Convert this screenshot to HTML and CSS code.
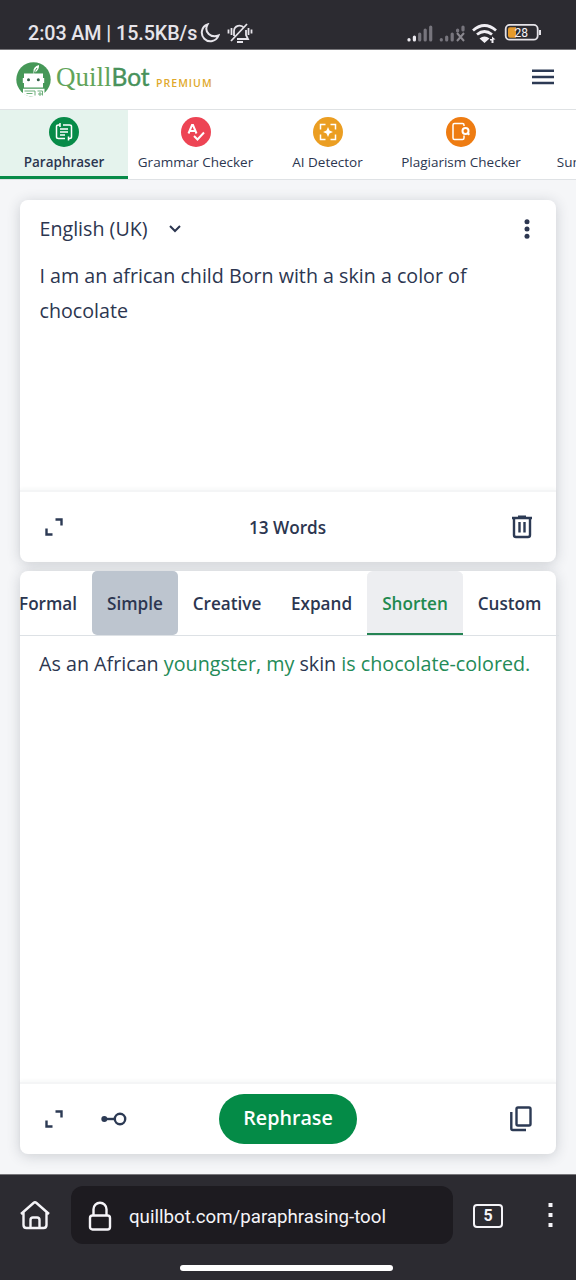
FILE: index.html
```html
<!DOCTYPE html>
<html lang="en">
<head>
<meta charset="utf-8">
<title>QuillBot Paraphraser</title>
<link rel="stylesheet" href="styles.css">
</head>
<body>
<div class="status">
  <span class="clock">2:03 AM | 15.5KB/s</span>
  <svg class="moon" width="20" height="20" viewBox="0 0 20 20"><path d="M7.500 1.500A8.600 8.600 0 1 0 18.500 12.500C11 15.500 3.500 9 7.500 1.500Z"/></svg>
  <svg class="bell" width="26" height="22" viewBox="0 0 26 22"><path d="M7 14V9a5.500 5.500 0 0 1 10-3M19 8v5l2 4H10M10 20h6M4 19 20 2M1.500 7.500v4M4.500 6v7M21.500 6v7M24.500 7.500v4"/></svg>
  <svg class="signals" width="134" height="20" viewBox="0 0 134 20">
    <g stroke-width="3.200" stroke-linecap="round" fill="none">
      <path stroke="#eceaf0" d="M2 17v-.5M7.400 17v-3"/>
      <path stroke="#77757d" d="M12.700 17v-6M18.200 17V7M23.700 17V4M34.300 17v-.5M39.700 17v-3M45.200 17v-6"/>
      <path stroke="#77757d" d="M50.600 8V7M56 7V4"/>
    </g>
    <path stroke="#8a888f" stroke-width="2" d="m50 10 7 8M57 10l-7 8"/>
    <g fill="none" stroke="#f0eef3" stroke-width="2.800"><path d="M66 7.500q11.500-10 23 0M70 11.500q7.500-6 15 0"/></g>
    <path fill="#f0eef3" d="M72.500 15.500q5-4 10 0l-5 4.500zM83 16h2v-2.500l3.500 3h-2v3.500h-2v-2.500h-1.500z"/>
    <rect x="98.700" y="1.900" width="32" height="14.800" rx="4" fill="none" stroke="#e5e3e8" stroke-width="1.800"/>
    <path fill="#e69b2c" d="M103 4.200h6v10.500h-6q-2 0-2-2v-6.500q0-2 2-2z"/>
    <path stroke="#e5e3e8" stroke-width="2" d="M133 7v5"/>
    <text x="107.500" y="13.700" class="charge">28</text>
  </svg>
</div>
<header class="header">
  <svg width="36" height="36" viewBox="0 0 36 36">
    <circle cx="17.500" cy="17.500" r="17.200" fill="#469858"/>
    <path fill="#fff" d="M8 11.500h9.500V9.500Q17 4.500 23 3 23.500 8 19 10.500v1h8V16h1.200v5H27v4.500H8V21H6.800v-5H8z"/>
    <g fill="#35624a"><circle cx="12.500" cy="17.800" r="1.500"/><circle cx="22.300" cy="17.800" r="1.500"/></g>
    <path fill="#fff" d="M7 26.800h21.500V33q-10 5-21.500-1z"/>
    <path fill="none" stroke="#6daf7a" d="M8.500 29h10.500v4.500M10.500 31.500h6M21.500 29h5v4.500M23 31h2v2h-2z"/>
    <path fill="none" stroke="#469858" d="M21 6q-2 2-2.700 5.500"/>
  </svg>
  <span class="brand"><span class="quill">Quill</span><span class="bot">Bot</span></span>
  <span class="premium">PREMIUM</span>
  <svg class="burger" width="22" height="16" viewBox="0 0 22 16"><path d="M0 1.800h22M0 7.900h22M0 14h22"/></svg>
</header>
<nav class="tools">
  <div class="tool paraphraser">
    <svg width="30" height="30" viewBox="0 0 30 30"><circle cx="15" cy="15" r="15" fill="#078b48"/><path class="line" d="M11.500 8H9.500Q7.500 8 7.500 9.500V20q0 1.500 2 1.500H16M11 6v4M14 8h6.500Q22.500 8 22.500 9.500V20q0 1.500-2 1.500H19M19.500 19.500v4M11 12h8M11 15h8M11 18h5"/></svg>
    <span>Paraphraser</span>
  </div>
  <div class="tool grammar">
    <svg width="30" height="30" viewBox="0 0 30 30"><circle cx="15" cy="15" r="15" fill="#ed4454"/><path class="line thick" d="m7.500 16.500 3.500-8.500h1l3.500 8.500M8.800 14h5.200M13 19l3.500 3.500 6.500-7"/></svg>
    <span>Grammar Checker</span>
  </div>
  <div class="tool detector">
    <svg width="30" height="30" viewBox="0 0 30 30"><circle cx="15" cy="15" r="15" fill="#eb9e22"/><path class="line" d="M12.500 7.500h-5v5M17.500 7.500h5v5M7.500 17.500v5h5M22.500 17.500v5h-5"/><path fill="#fff" d="m15 10 1.500 3.500L20 15l-3.500 1.500L15 20l-1.500-3.500L10 15l3.500-1.500z"/></svg>
    <span>AI Detector</span>
  </div>
  <div class="tool plagiarism">
    <svg width="30" height="30" viewBox="0 0 30 30"><circle cx="15" cy="15" r="15" fill="#ee7c12"/><path class="line" d="M18 9V8q0-1.500-1.500-1.500h-8Q7 6.500 7 8v13q0 1.500 1.500 1.500h8Q18 22.500 18 21v-2.500"/><circle class="line thick" cx="19.500" cy="14" r="3"/><path class="line thick" d="m21.500 16 1.800 1.800"/></svg>
    <span>Plagiarism Checker</span>
  </div>
  <div class="tool summarizer"><span>Summarizer</span></div>
</nav>
<main class="page">
  <section class="card source">
    <div class="lang">
      <span>English (UK)</span>
      <svg class="chevron" width="14" height="10" viewBox="0 0 14 10"><path d="m2 2 5 5 5-5"/></svg>
      <svg class="dots" width="6" height="20" viewBox="0 0 6 20"><circle cx="3" cy="2.800" r="2.500"/><circle cx="3" cy="10" r="2.500"/><circle cx="3" cy="17.200" r="2.500"/></svg>
    </div>
    <p class="input">I am an african child Born with a skin a color of<br>chocolate</p>
    <footer class="foot">
      <svg class="expand" width="18" height="18" viewBox="0 0 18 18"><path d="M10.500 1.500h6v6M1.500 10.500v6h6"/></svg>
      <span class="count">13 Words</span>
      <svg class="trash" width="20" height="24" viewBox="0 0 20 24"><path d="M0 3h20M6 1.700h8M2 3v17q0 2 2 2h12q2 0 2-2V3M7.500 7v10.500M12.500 7v10.500"/></svg>
    </footer>
  </section>
  <section class="card result">
    <div class="modes">
      <span class="mode formal">Formal</span>
      <span class="mode simple">Simple</span>
      <span class="mode creative">Creative</span>
      <span class="mode longer">Expand</span>
      <span class="mode shorten">Shorten</span>
      <span class="mode custom">Custom</span>
    </div>
    <p class="output">As an African <em>youngster, my</em> skin <em>is chocolate-colored.</em></p>
    <footer class="foot">
      <svg class="expand" width="18" height="18" viewBox="0 0 18 18"><path d="M10.500 1.500h6v6M1.500 10.500v6h6"/></svg>
      <svg class="slider" width="26" height="14" viewBox="0 0 26 14"><path d="M4 7h9"/><circle class="knob" cx="3.300" cy="7" r="3"/><circle cx="19" cy="7" r="5.200"/></svg>
      <button class="rephrase">Rephrase</button>
      <svg class="copy" width="22" height="26" viewBox="0 0 22 26"><rect x="6.500" y="1.500" width="14" height="18" rx="1.500"/><path d="M1.300 6v16.500q0 1.500 1.500 1.500H16"/></svg>
    </footer>
  </section>
</main>
<div class="browser">
  <div class="controls">
    <svg class="home" width="32" height="30" viewBox="0 0 32 30"><path d="m2 14 12.500-11q1.500-1.300 3 0L30 14M4.500 12v13q0 3 3 3h17q3 0 3-3V12M11.500 28v-8q0-2.500 2.500-2.500h4q2.500 0 2.500 2.500v8"/></svg>
    <div class="address">
      <svg width="24" height="30" viewBox="0 0 24 30"><rect x="2" y="14.500" width="20" height="14" rx="2.500"/><path d="M5.500 14.500V8.200a6.500 6.500 0 0 1 13 0v6.300"/></svg>
      <span>quillbot.com/paraphrasing-tool</span>
    </div>
    <span class="tabs">5</span>
    <svg class="more" width="5" height="24" viewBox="0 0 5 24"><path d="M.5 0h4v4h-4zM.5 10h4v4h-4zM.5 20h4v4h-4z"/></svg>
  </div>
  <div class="pill"></div>
</div>
</body>
</html>
```
FILE: styles.css
```css
* { box-sizing: border-box; }
body { margin: 0; width: 576px; height: 1280px; overflow: hidden; display: flex; flex-direction: column; background: #f5f6f8; color: #2c3650; font-family: "Open Sans", sans-serif; }
svg { display: block; flex: none; }
p { margin: 0; }
span { white-space: nowrap; }

.status { height: 50px; flex: none; display: flex; align-items: center; padding: 16px 35px 0 28px; background: #2c2b31; border-bottom: 1px solid #77767a; font-family: Roboto, sans-serif; color: #e6e4ea; }
.clock { width: 170px; padding-top: 2px; font-size: 19.700px; font-weight: 500; letter-spacing: -0.060px; }
.moon { margin-left: 2px; }
.bell { margin-left: 7px; }
.moon path, .bell path { fill: none; stroke: #e6e4ea; stroke-width: 2; }
.bell path { stroke-width: 1.800; }
.signals { margin-left: auto; }
.charge { font: 12px Roboto, sans-serif; fill: #f4f2f6; }

.header { height: 60px; flex: none; display: flex; align-items: center; padding: 0 22px 0 16px; background: #fff; border-bottom: 1px solid #dfe2e4; }
.brand { margin: 0 0 0 4px; width: 96px; line-height: 34px; }
.quill { font: 27px "Liberation Serif", serif; color: #62a45a; }
.bot { font: 24.500px Lato, sans-serif; color: #48925b; -webkit-text-stroke: 0.400px #48925b; }
.premium { margin: 7px 0 0 4px; font-size: 10.500px; font-weight: 600; letter-spacing: 1.040px; color: #dfa92c; }
.burger { margin: -5px 0 0 auto; }
.burger path { stroke: #2c3a54; stroke-width: 2.500; }

.tools { height: 70px; flex: none; display: flex; overflow: hidden; background: #fff; border-bottom: 1px solid #dfe2e5; }
.tool { flex: none; display: flex; flex-direction: column; align-items: center; gap: 6px; padding-top: 7px; font-size: 13.500px; line-height: 18px; }
.line { fill: none; stroke: #fff; stroke-width: 1.500; }
.thick { stroke-width: 2; }
.paraphraser { width: 128px; background: #e5f3ed; border-bottom: 3px solid #078b48; font-weight: 600; }
.grammar { width: 135px; }
.detector { width: 129px; }
.plagiarism { width: 138px; }
.summarizer { width: 130px; padding-top: 43px; }

.page { flex: 1; display: flex; flex-direction: column; gap: 9px; padding: 20px 20px 0; }
.card { background: #fff; border-radius: 8px; box-shadow: 0 2px 14px rgba(40, 50, 65, 0.200); display: flex; flex-direction: column; }
.source { height: 362px; }
.result { height: 583px; }
.lang { display: flex; align-items: center; height: 58px; padding: 0 26px 0 19.500px; font-size: 19.670px; }
.lang span { margin-top: -1px; }
.chevron { margin-left: 20px; }
.chevron path { fill: none; stroke: #2c3650; stroke-width: 2; }
.dots { margin-left: auto; fill: #2c3650; }
.input { flex: 1; padding-left: 19.500px; font-size: 19.670px; line-height: 35px; }
.foot { height: 72px; flex: none; display: flex; align-items: center; padding: 0 24px 0 25px; border-top: 2px solid #f4f5f6; box-shadow: 0 -2px 3px rgba(40, 50, 65, 0.030); }
.foot svg { fill: none; stroke: #2c3a54; stroke-width: 2.400; }
.foot .knob { fill: #2c3a54; stroke: none; }
.count { margin: 0 auto; font-size: 17.150px; font-weight: 600; }

.modes { display: flex; height: 65px; flex: none; margin: 0 -3px 0 -1px; border-bottom: 1px solid #dde1e5; font-size: 17.150px; font-weight: 600; }
.mode { display: flex; flex: none; align-items: center; justify-content: center; height: 64px; }
.formal { width: 73px; justify-content: flex-start; }
.simple { width: 86px; border-radius: 5px; background: #bdc5cf; }
.creative { width: 98px; }
.longer { width: 91px; }
.shorten { width: 96px; border-radius: 6px 6px 0 0; background: #edeef1; color: #20894f; box-shadow: inset 0 -2px #258453; }
.custom { width: 93px; }
.output { flex: 1; padding: 10px 0 0 19px; font-size: 19.720px; line-height: 35px; white-space: nowrap; }
.output em { font-style: normal; color: #248b58; }
.foot .slider { margin-left: 38px; }
.rephrase { margin-left: 92px; width: 138px; height: 50px; border: 0; border-radius: 25px; background: #048b47; color: #fff; font: 600 19.700px/48px "Open Sans", sans-serif; padding: 0 0 2px; }
.foot .copy { margin-left: auto; }

.browser { height: 106px; flex: none; background: #2c2b31; border-top: 1px solid #77767a; color: #f5f4f8; font-family: Roboto, sans-serif; }
.controls { display: flex; align-items: center; height: 58px; margin-top: 11px; padding: 0 23px 0 19px; }
.home path, .address rect, .address path { fill: none; stroke: #f5f4f8; stroke-width: 2.400; }
.address { display: flex; align-items: center; gap: 17px; width: 382px; height: 58px; margin-left: 20px; padding: 2px 0 0 17px; border-radius: 12px; background: #1d1b20; font-size: 18.700px; }
.address span { padding-top: 1px; }
.tabs { display: grid; place-items: center; width: 30px; height: 24px; margin: 1px 0 0 20px; border: 2px solid #f5f4f8; border-radius: 4px; font-size: 16px; font-weight: 700; }
.more { margin-left: auto; fill: #f5f4f8; }
.pill { width: 213px; height: 6px; margin: 21px auto 0 180px; border-radius: 3px; background: #fff; }
```
